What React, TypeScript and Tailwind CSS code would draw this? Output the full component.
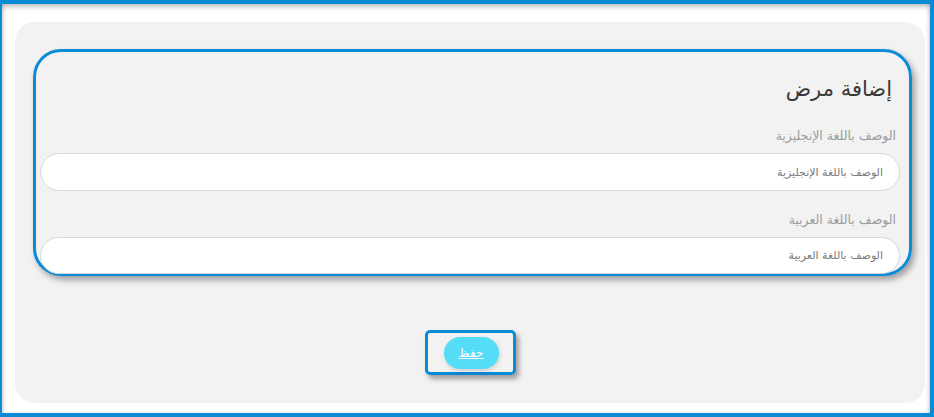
import React from 'react'

const fields = [
  { id: 'descEn', label: 'الوصف باللغة الإنجليزية' },
  { id: 'descAr', label: 'الوصف باللغة العربية' },
]

export default function App() {
  return (
    <div
      className="w-[934px] h-[417px] bg-white border-t-4 border-b-4 border-l-2 border-r-4 border-[#0b8ad6] pt-[18px] pl-[13px] pr-[5px] pb-[10px] shadow-[inset_0_5px_5px_-2px_rgba(0,0,0,0.22),inset_3px_0_4px_-2px_rgba(0,0,0,0.2),inset_-3px_0_4px_-2px_rgba(0,0,0,0.2)]"
      style={{ fontFamily: '"DejaVu Sans", "Noto Sans", sans-serif' }}
    >
      <div className="h-full rounded-[20px] bg-[#f2f2f2] pt-[27px] pl-[18px] pr-[13px] flex flex-col">
        {/* Form card */}
        <div
          dir="rtl"
          className="h-[227px] rounded-[28px] border-[3px] border-[#0b8ad6] shadow-[3px_4px_6px_rgba(0,0,0,0.35)] pr-[9px] pl-1 pt-[22px] flex flex-col"
        >
          <h1 className="pr-2 text-[21px] leading-[30px] font-normal text-[#383838]">إضافة مرض</h1>

          {fields.map((f, i) => (
            <div key={f.id} className={i === 0 ? 'mt-[22px]' : 'mt-[19px]'}>
              <label htmlFor={f.id} className="block pr-1 text-[12.5px] leading-[20px] text-[#9c9c9c]">
                {f.label}
              </label>
              <input
                id={f.id}
                placeholder={f.label}
                className={`mt-[7px] block w-full rounded-full border border-[#d8d8d8] bg-white pr-4 text-[11px] text-[#555] outline-none placeholder:text-[#7a7a7a] ${i === 0 ? 'h-[38px]' : 'h-[37px]'}`}
              />
            </div>
          ))}
        </div>

        {/* Save */}
        <div className="mt-[54px] pr-[5px] flex justify-center">
          <div className="rounded-[5px] border-[3px] border-[#0b8ad6] shadow-[3px_4px_5px_rgba(0,0,0,0.35)] pt-1 pb-[3px] pl-4 pr-[14px]">
            <button className="h-[32px] w-[55px] rounded-full bg-[#55dcf6] text-[12px] font-medium text-white underline shadow-[1px_2px_4px_rgba(0,0,0,0.15)]">
              حفظ
            </button>
          </div>
        </div>
      </div>
    </div>
  )
}
